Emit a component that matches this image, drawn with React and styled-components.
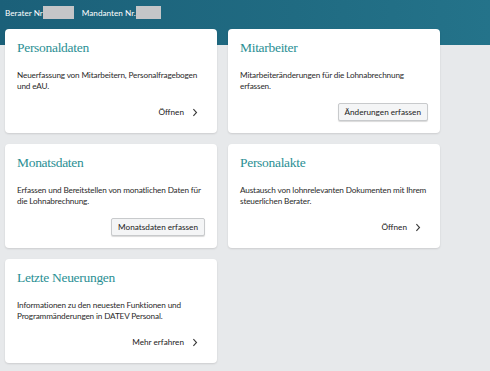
import styled, { createGlobalStyle } from 'styled-components';

const GlobalStyle = createGlobalStyle`
  html, body {
    margin: 0;
    padding: 0;
    background: #e7e9eb;
    font-family: Lato, "Noto Sans", sans-serif;
  }
`;

const cards = [
  {
    title: 'Personaldaten',
    text: 'Neuerfassung von Mitarbeitern, Personalfragebogen und eAU.',
    action: 'Öffnen',
    kind: 'link'
  },
  {
    title: 'Mitarbeiter',
    text: 'Mitarbeiteränderungen für die Lohnabrechnung erfassen.',
    action: 'Änderungen erfassen',
    kind: 'button'
  },
  {
    title: 'Monatsdaten',
    text: 'Erfassen und Bereitstellen von monatlichen Daten für die Lohnabrechnung.',
    action: 'Monatsdaten erfassen',
    kind: 'button'
  },
  {
    title: 'Personalakte',
    text: 'Austausch von lohnrelevanten Dokumenten mit Ihrem steuerlichen Berater.',
    action: 'Öffnen',
    kind: 'link'
  },
  {
    title: 'Letzte Neuerungen',
    text: 'Informationen zu den neuesten Funktionen und Programmänderungen in DATEV Personal.',
    action: 'Mehr erfahren',
    kind: 'link'
  }
];

function Chevron() {
  return (
    <svg width="6" height="9" viewBox="0 0 6 9" fill="none">
      <path d="M1.4 1.2 L4.5 4.5 L1.4 7.8" stroke="#3a3a3a" strokeWidth="1.1" />
    </svg>
  );
}

function App() {
  return (
    <Page>
      <GlobalStyle />
      <Header>
        <Ids>
          Berater Nr<Masked $w={31} />
          <Gap />
          Mandanten Nr.<Masked $w={25} />
        </Ids>
      </Header>
      <Grid>
        {cards.map(c => (
          <Card key={c.title}>
            <Title>{c.title}</Title>
            <Text>{c.text}</Text>
            <Actions>
              {c.kind === 'button' ? (
                <Button>{c.action}</Button>
              ) : (
                <LinkAction>
                  {c.action}
                  <Chevron />
                </LinkAction>
              )}
            </Actions>
          </Card>
        ))}
      </Grid>
    </Page>
  );
}

export default App;

const Page = styled.div`
  width: 490px;
  min-height: 371px;
  background: #e7e9eb;
`;

const Header = styled.div`
  height: 45px;
  background: linear-gradient(90deg, #1b6079 0%, #206b82 60%, #24738a 100%);
  padding: 6px 0 0 5px;
  box-sizing: border-box;
`;

const Ids = styled.div`
  display: flex;
  align-items: center;
  color: #ffffff;
  font-size: 8.2px;
  height: 13px;
`;

const Masked = styled.span`
  display: inline-block;
  width: ${p => p.$w}px;
  height: 13px;
  background: #c4c6c8;
`;

const Gap = styled.span`
  width: 8px;
`;

const Grid = styled.div`
  display: grid;
  grid-template-columns: 212px 212px;
  gap: 11px;
  padding: 0 0 9px 5px;
  margin-top: -16px;
`;

const Card = styled.div`
  background: #ffffff;
  border-radius: 4px;
  box-shadow: 0 1px 2px rgba(0, 0, 0, 0.12);
  height: 104px;
  box-sizing: border-box;
  padding: 10px 12px 12px 12px;
  display: flex;
  flex-direction: column;
`;

const Title = styled.div`
  font-family: "Liberation Serif", "DejaVu Serif", serif;
  font-size: 13.5px;
  letter-spacing: -0.3px;
  color: #2b8f94;
  line-height: 18px;
  margin-bottom: 13px;
`;

const Text = styled.div`
  font-size: 8.2px;
  letter-spacing: -0.15px;
  line-height: 11px;
  color: #2a2a2a;
  margin-right: -4px;
`;

const Actions = styled.div`
  margin-top: auto;
  display: flex;
  justify-content: flex-end;
`;

const Button = styled.div`
  font-size: 8.2px;
  color: #222;
  background: #f4f5f6;
  border: 1px solid #c8cacc;
  border-radius: 2px;
  box-shadow: 0 1px 1px rgba(0, 0, 0, 0.15);
  height: 18px;
  box-sizing: border-box;
  padding: 0 6px;
  display: flex;
  align-items: center;
`;

const LinkAction = styled.div`
  font-size: 8.2px;
  color: #222;
  display: flex;
  align-items: center;
  gap: 8px;
  height: 18px;
  padding-right: 7px;
`;
